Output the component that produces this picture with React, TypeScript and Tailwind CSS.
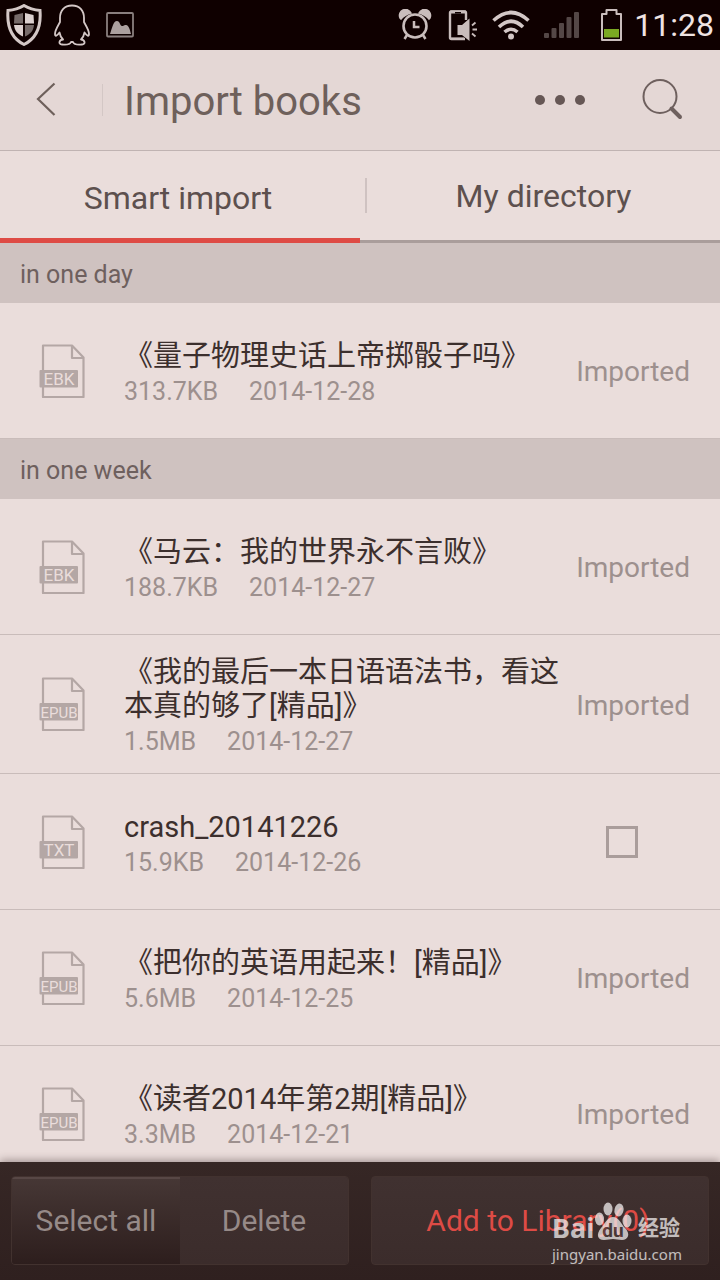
import { useState } from "react";

type Book = {
  title: string;
  size: string;
  date: string;
  kind: "EBK" | "EPUB" | "TXT";
  imported: boolean;
};

type Group = { label: string; books: Book[] };

const GROUPS: Group[] = [
  {
    label: "in one day",
    books: [
      { title: "《量子物理史话上帝掷骰子吗》", size: "313.7KB", date: "2014-12-28", kind: "EBK", imported: true },
    ],
  },
  {
    label: "in one week",
    books: [
      { title: "《马云：我的世界永不言败》", size: "188.7KB", date: "2014-12-27", kind: "EBK", imported: true },
      { title: "《我的最后一本日语语法书，看这本真的够了[精品]》", size: "1.5MB", date: "2014-12-27", kind: "EPUB", imported: true },
      { title: "crash_20141226", size: "15.9KB", date: "2014-12-26", kind: "TXT", imported: false },
      { title: "《把你的英语用起来！[精品]》", size: "5.6MB", date: "2014-12-25", kind: "EPUB", imported: true },
      { title: "《读者2014年第2期[精品]》", size: "3.3MB", date: "2014-12-21", kind: "EPUB", imported: true },
    ],
  },
];

function StatusBar() {
  return (
    <div className="flex h-[50px] shrink-0 items-center bg-[#0f0000] px-1.5">
      <svg width="36" height="42" viewBox="0 0 36 42" aria-hidden>
        <path d="M18 1.5C13 4.5 8 6 2 6.5C1 19 3 33 18 40.5C33 33 35 19 34 6.5C28 6 23 4.5 18 1.5Z" fill="none" stroke="#d3c7c6" strokeWidth="3" />
        <path d="M17 9V19.5H8L8.5 11Z" fill="#766a69" />
        <path d="M19 9V19.5H28L27.5 11Z" fill="#dcd0cf" />
        <path d="M17 21V32.5C11 30 8.5 26 8 21Z" fill="#dcd0cf" />
        <path d="M19 21V32.5C25 30 27.5 26 28 21Z" fill="#766a69" />
      </svg>
      <svg className="ml-3" width="36" height="42" viewBox="0 0 36 42" aria-hidden>
        <path
          d="M18 1.5C10 1.5 6 7 6 14V18C4 22 1 26 1 30C1 33 3 32 5.5 28.5C6 31.5 7.5 34 9 35.5C5 36 4 40 8 40.5C12 41 16 40.5 17 38H19C20 40.5 24 41 28 40.5C32 40 31 36 27 35.5C28.5 34 30 31.5 30.5 28.5C33 32 35 33 35 30C35 26 32 22 30 18V14C30 7 26 1.5 18 1.5Z"
          fill="none" stroke="#d3c7c6" strokeWidth="1.8" strokeLinejoin="round"
        />
      </svg>
      <svg className="ml-4" width="28" height="26" viewBox="0 0 28 26" aria-hidden>
        <rect x="1" y="1" width="26" height="23.5" rx="1" fill="none" stroke="#8a7f7e" strokeWidth="1.8" />
        <path d="M4 22C6 17 7 9 11 9C14 9 14 14 16 14C18 14 18 12.5 20 13C23 13.5 24 18 25 22Z" fill="#aca09f" />
      </svg>

      <div className="ml-auto flex items-center">
        <svg width="34" height="32" viewBox="0 0 34 32" aria-hidden fill="none" stroke="#c9bdbc">
          <path d="M2 9A6 6 0 0 1 13 4Q6 6 3 10Z M32 9A6 6 0 0 0 21 4Q28 6 31 10Z" fill="#c9bdbc" strokeWidth="1.5" />
          <circle cx="17" cy="17" r="11.5" strokeWidth="2.6" />
          <path d="M16 12V18H21.5" strokeWidth="2.5" />
          <path d="M9 26L6.5 30M25 26L27.5 30" strokeWidth="2.5" />
        </svg>
        <svg className="ml-4" width="30" height="34" viewBox="0 0 30 34" aria-hidden>
          <path d="M18 12V5Q18 3.5 16.5 3.5H3.5Q2 3.5 2 5V29.5Q2 31 3.5 31H17" fill="none" stroke="#c9bdbc" strokeWidth="2.4" />
          <path d="M2 2.5H18V5.5H2ZM2 29.5H16V32H2Z" fill="#c9bdbc" />
          <path d="M7 4H13V5.5H7Z" fill="#0f0000" />
          <path d="M9.5 17H14L21.5 10.5V33L14 27H9.5Z" fill="#c9bdbc" />
          <path d="M24 17.5L27.5 14.5M24.5 21.5H29M24 25.5L27.5 28.5" stroke="#c9bdbc" strokeWidth="1.8" />
        </svg>
        <svg className="ml-3.5" width="38" height="30" viewBox="0 0 38 30" aria-hidden>
          <path d="M1.5 10.5Q19 -5.5 36.5 10.5M7 17Q19 5.5 31 17M12.5 22Q19 16.5 25.5 22" fill="none" stroke="#d3c7c6" strokeWidth="3.6" />
          <circle cx="19" cy="26.5" r="3" fill="#d3c7c6" />
        </svg>
        <svg className="ml-3.5" width="36" height="28" viewBox="0 0 36 28" aria-hidden fill="#544746">
          <rect y="22" width="5" height="5" rx="1" />
          <rect x="7.5" y="17" width="5" height="10" rx="1" />
          <rect x="15" y="12" width="5" height="15" rx="1" />
          <rect x="22.5" y="6" width="5" height="21" rx="1" />
          <rect x="30" y="1" width="5" height="26" rx="1" />
        </svg>
        <svg className="ml-5" width="24" height="34" viewBox="0 0 24 34" aria-hidden>
          <path d="M2 6H6.5V2H16.5V6H21V32H2Z" fill="none" stroke="#c9bdbc" strokeWidth="2" strokeLinejoin="round" />
          <rect x="4" y="21" width="15" height="8.5" fill="#7aa822" />
        </svg>
        <span className="ml-2.5 text-[32px] leading-10 text-[#efe3e2]">11:28</span>
      </div>
    </div>
  );
}

function Header() {
  return (
    <header className="flex h-[101px] shrink-0 items-center border-b border-[#c0b3b2] bg-[#e4d7d5]">
      <button type="button" aria-label="Back" className="flex h-16 w-[102px] items-center pl-9">
        <svg width="20" height="36" viewBox="0 0 20 36" aria-hidden fill="none" stroke="#6e605b" strokeWidth="2.2">
          <path d="M18.5 1.5L2 17L18.5 33" />
        </svg>
      </button>
      <span className="h-8 w-px bg-[#d3c7c5]" />
      <h1 className="pl-[21px] pt-1 text-[40px] leading-[48px] text-[#6e605b]">Import books</h1>
      <button type="button" aria-label="More" className="ml-auto flex h-16 items-center px-3">
        <svg width="52" height="12" viewBox="0 0 52 12" aria-hidden fill="#665755">
          <circle cx="6" cy="6" r="5" />
          <circle cx="26" cy="6" r="5" />
          <circle cx="46" cy="6" r="5" />
        </svg>
      </button>
      <button type="button" aria-label="Search" className="ml-7 mr-[22px] flex h-16 w-[72px] items-center justify-center">
        <svg width="42" height="42" viewBox="0 0 42 42" aria-hidden fill="none" stroke="#6e605e">
          <circle cx="19" cy="17.5" r="16.5" strokeWidth="2" />
          <path d="M30.5 29.5L39 38" strokeWidth="4" strokeLinecap="round" />
        </svg>
      </button>
    </header>
  );
}

function Tabs() {
  return (
    <nav className="flex h-[92px] shrink-0 text-[32px] leading-10 text-[#5d504e]">
      <button type="button" className="flex w-1/2 items-center justify-center border-b-[5px] border-[#de4b45] pr-1 pt-1.5">
        Smart import
      </button>
      <button type="button" className="flex w-1/2 items-center border-b-[3px] border-[#aa9d9b] pl-[5px]">
        <span className="h-[35px] w-0.5 bg-[#cfc2c1]" />
        <span className="flex-1">My directory</span>
      </button>
    </nav>
  );
}

function FileIcon({ kind }: { kind: Book["kind"] }) {
  return (
    <svg className="shrink-0" width="47" height="54" viewBox="0 0 47 54" aria-hidden>
      <path d="M4 1.5H33L44.5 13.5V53H4Z M33 1.5V14H44.5" fill="none" stroke="#b4a7a5" strokeWidth="2.2" strokeLinejoin="round" />
      <rect x="0.5" y="26" width="38.5" height="17.5" rx="1" fill="#b4a7a5" />
      <text x="20" y="40.5" textAnchor="middle" fontSize={kind === "EPUB" ? 15 : 17} fill="#eadddb">
        {kind}
      </text>
    </svg>
  );
}

function BookRow({ book }: { book: Book }) {
  return (
    <li className="flex min-h-[136px] items-center border-b border-[#c9bcba] py-4 pl-[39px] pr-[30px]">
      <FileIcon kind={book.kind} />
      <div className="ml-[38px] min-w-0 flex-1 pt-1">
        <p className="text-[29px] leading-[34px] text-[#3c2f2d]">{book.title}</p>
        <p className="mt-1 flex gap-[31px] text-[25px] leading-[30px] text-[#9d908e]">
          <span>{book.size}</span>
          <span>{book.date}</span>
        </p>
      </div>
      <div className="ml-2.5 flex w-[120px] shrink-0 justify-end">
        {book.imported ? (
          <span className="pt-[3px] text-[28px] leading-8 text-[#9d908e]">Imported</span>
        ) : (
          <input
            type="checkbox"
            aria-label={book.title}
            className="mr-[52px] size-8 appearance-none border-[3px] border-[#aa9d9b] checked:bg-[#de4b45]"
          />
        )}
      </div>
    </li>
  );
}

function Watermark() {
  return (
    <div aria-hidden className="pointer-events-none absolute bottom-4 right-10 w-32 text-[#f0eded] opacity-75">
      <div className="flex h-11 items-end leading-8">
        <b className="font-['Noto_Sans'] text-[27px]">Bai</b>
        <svg width="38" height="44" viewBox="0 0 38 44">
          <g fill="#f0eded">
            <ellipse cx="5.5" cy="19" rx="4.5" ry="6.5" />
            <ellipse cx="14" cy="9" rx="4.5" ry="6.5" />
            <ellipse cx="25" cy="10" rx="4.5" ry="6.5" transform="rotate(12 25 10)" />
            <ellipse cx="33" cy="21" rx="4.5" ry="6.5" />
            <path d="M19 17C25 17 27 24 31 28C37 34 34 40 28 40C24 40 22 39 19 39C16 39 14 40 10 40C3 40 2 34 7 28C11 24 13 17 19 17Z" />
          </g>
          <text x="19" y="37" textAnchor="middle" fontSize="19" fontWeight="700" fill="#4a3a38">du</text>
        </svg>
        <b className="ml-auto text-[21px]">经验</b>
      </div>
      <p className="font-['Noto_Sans'] text-[15px] leading-5">jingyan.baidu.com</p>
    </div>
  );
}

function Toolbar() {
  return (
    <footer className="relative grid h-[118px] shrink-0 grid-cols-2 gap-[22px] bg-linear-to-b from-[#362725] to-[#2f201f] px-[11px] pb-[15px] pt-3.5 text-[30px] leading-9 text-[#968a88] shadow-[0_-2px_8px_rgba(60,40,40,0.4)]">
      <div className="grid grid-cols-2 overflow-hidden rounded-sm border border-[#42322f]">
        <button type="button" className="border-t-2 border-[#574745] bg-linear-to-b from-[#463735] to-[#2d1e1d] pb-0.5">
          Select all
        </button>
        <button type="button" className="bg-linear-to-b from-[#403130] to-[#3b2c2b]">
          Delete
        </button>
      </div>
      <button type="button" className="rounded-sm border border-[#42322f] bg-linear-to-b from-[#403130] to-[#3b2c2b] pr-1 text-[#de4b45]">
        Add to Library(0)
      </button>
      <Watermark />
    </footer>
  );
}

export default function App() {
  const [groups] = useState(GROUPS);

  return (
    <div className="flex h-screen flex-col bg-[#eadddb] font-[Roboto,'Noto_Sans_CJK_SC',sans-serif]">
      <StatusBar />
      <Header />
      <Tabs />
      <main className="min-h-0 flex-1 overflow-y-auto [scrollbar-width:none]">
        {groups.map((group) => (
          <section key={group.label}>
            <h2 className="bg-[#cfc2c0] px-5 pb-[13px] pt-[17px] text-[25px] leading-[30px] text-[#6e605e]">
              {group.label}
            </h2>
            <ul>
              {group.books.map((book) => (
                <BookRow key={book.title} book={book} />
              ))}
            </ul>
          </section>
        ))}
      </main>
      <Toolbar />
    </div>
  );
}
